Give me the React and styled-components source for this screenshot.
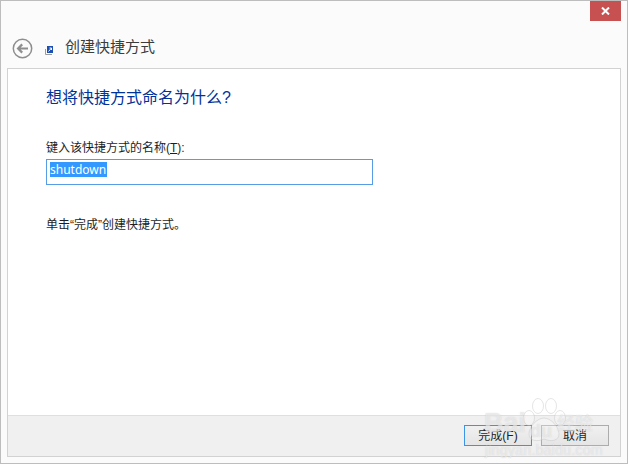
import React from 'react'
import styled, { createGlobalStyle } from 'styled-components'

const GlobalStyle = createGlobalStyle`
  html, body {
    margin: 0;
    padding: 0;
    background: #fff;
  }
`

const Window = styled.div`
  position: relative;
  box-sizing: border-box;
  width: 628px;
  height: 464px;
  display: flex;
  flex-direction: column;
  overflow: hidden;
  background: #fbfbfb;
  border: 1px solid #bdbdbd;
  font-family: "Liberation Sans", "Noto Sans CJK SC", sans-serif;
  color: #1e1e1e;
`

const TitleBar = styled.div`
  height: 20px;
  display: flex;
  justify-content: flex-end;
  padding-right: 6px;
`

const CloseButton = styled.div`
  width: 31px;
  height: 20px;
  display: flex;
  align-items: center;
  justify-content: center;
  background: #c75050;
`

const NavBar = styled.div`
  height: 47px;
  display: flex;
  align-items: center;
  padding: 7px 0 0 11px;
  box-sizing: border-box;
`

const BackIcon = styled.svg`
  width: 21px;
  height: 21px;
`

const ShortcutIcon = styled.svg`
  width: 8px;
  height: 9px;
  margin: 4px 0 0 12px;
`

const NavTitle = styled.span`
  margin: -3px 0 0 12px;
  font-size: 15px;
  line-height: 20px;
  color: #3c3c3c;
`

const Panel = styled.div`
  flex: 1;
  display: flex;
  flex-direction: column;
  margin: 0 6px 6px;
  background: #fff;
  border: 1px solid #d2d2d2;
`

const Content = styled.div`
  flex: 1;
  padding: 18px 0 0 38px;
`

const Heading = styled.h1`
  margin: 0;
  font-size: 16px;
  font-weight: 400;
  line-height: 22px;
  color: #003399;
`

const FieldLabel = styled.div`
  margin-top: 30px;
  font-size: 12px;
  line-height: 18px;

  u {
    text-underline-offset: 1px;
  }
`

const NameInput = styled.div`
  box-sizing: border-box;
  width: 327px;
  height: 26px;
  margin-top: 2px;
  padding: 2px 3px;
  border: 1px solid #569de5;
  background: #fff;
`

const Selected = styled.span`
  display: inline-block;
  height: 15px;
  padding: 0 1px 0 0;
  background: #3399ff;
  color: #fff;
  font-family: "Noto Sans", sans-serif;
  font-size: 12px;
  line-height: 15px;
  vertical-align: top;
`

const Hint = styled.div`
  margin-top: 31px;
  font-size: 12px;
  line-height: 18px;
`

const Footer = styled.div`
  height: 41px;
  display: flex;
  justify-content: flex-end;
  gap: 9px;
  padding: 9px 11px 0 0;
  box-sizing: border-box;
  background: #f0f0f0;
  border-top: 1px solid #dfdfdf;
`

const Button = styled.div`
  box-sizing: border-box;
  width: 68px;
  height: 21px;
  display: flex;
  align-items: center;
  justify-content: center;
  font-size: 12px;
  line-height: 16px;
  background: linear-gradient(#f0f0f0, #e5e5e5);
  border: 1px solid ${(p) => (p.$primary ? '#3c94e6' : '#acacac')};
`

// Baidu jingyan watermark stamped over the bottom right corner
const Watermark = styled.div`
  position: absolute;
  left: 0;
  top: 0;
  width: 626px;
  height: 462px;
  pointer-events: none;
  font-family: "Liberation Sans", "Noto Sans CJK SC", sans-serif;
  color: rgba(255, 255, 255, 0.5);
  text-shadow: 0 0 1px rgba(170, 170, 170, 0.5);
  white-space: nowrap;
`

const WatermarkPaw = styled.svg`
  position: absolute;
  left: 519px;
  top: 397px;
  width: 48px;
  height: 46px;
  fill: rgba(255, 255, 255, 0.25);
  stroke: rgba(190, 190, 190, 0.4);
  stroke-width: 1;
`

const WatermarkBai = styled.span`
  position: absolute;
  left: 483px;
  top: 407px;
  font-size: 27px;
  font-weight: 700;
  line-height: 30px;
`

const WatermarkDu = styled.span`
  position: absolute;
  left: 529px;
  top: 420px;
  font-size: 18px;
  font-weight: 700;
  line-height: 20px;
`

const WatermarkCn = styled.span`
  position: absolute;
  left: 556px;
  top: 411px;
  font-size: 18px;
  line-height: 24px;
`

const WatermarkUrl = styled.span`
  position: absolute;
  left: 484px;
  top: 441px;
  font-size: 14px;
  letter-spacing: 0.3px;
  line-height: 16px;
`

const App = () => {
  return (
    <>
      <GlobalStyle />
      <Window>
        <TitleBar>
          <CloseButton>
            <svg width="9" height="8" viewBox="0 0 9 8">
              <path d="M1 .5 8 7.5M8 .5 1 7.5" stroke="#fff" strokeWidth="2" />
            </svg>
          </CloseButton>
        </TitleBar>
        <NavBar>
          <BackIcon viewBox="0 0 21 21">
            <circle cx="10.5" cy="10.5" r="9.2" fill="#fbfbfb" stroke="#8e8e8e" strokeWidth="1.5" />
            <path d="M16 10.5H6.5M10.2 6.4 6.1 10.5l4.1 4.1" fill="none" stroke="#8e8e8e" strokeWidth="2.2" />
          </BackIcon>
          <ShortcutIcon viewBox="0 0 8 9">
            <path d="M.5 3v5.5H7" fill="none" stroke="#9a9a9a" />
            <rect x="2" y="0" width="6" height="7" fill="#1c4fb0" />
            <path d="M3.5 5.5 6.5 2M4.5 2h2v2" fill="none" stroke="#fff" />
          </ShortcutIcon>
          <NavTitle>创建快捷方式</NavTitle>
        </NavBar>
        <Panel>
          <Content>
            <Heading>想将快捷方式命名为什么?</Heading>
            <FieldLabel>键入该快捷方式的名称(<u>T</u>):</FieldLabel>
            <NameInput>
              <Selected>shutdown</Selected>
            </NameInput>
            <Hint>单击“完成”创建快捷方式。</Hint>
          </Content>
          <Footer>
            <Button $primary>完成(F)</Button>
            <Button>取消</Button>
          </Footer>
        </Panel>
        <Watermark>
          <WatermarkPaw viewBox="0 0 48 46">
            <ellipse cx="9" cy="20" rx="5.5" ry="7.5" />
            <ellipse cx="18" cy="8" rx="5.5" ry="7.5" />
            <ellipse cx="31" cy="8" rx="5.5" ry="7.5" />
            <ellipse cx="40" cy="20" rx="5.5" ry="7.5" />
            <path d="M24 20c-7 0-15 9-15 16 0 7 8 8 15 5 7 3 15 2 15-5 0-7-8-16-15-16z" />
          </WatermarkPaw>
          <WatermarkBai>Bai</WatermarkBai>
          <WatermarkDu>du</WatermarkDu>
          <WatermarkCn>经验</WatermarkCn>
          <WatermarkUrl>jingyan.baidu.com</WatermarkUrl>
        </Watermark>
      </Window>
    </>
  )
}

export default App
